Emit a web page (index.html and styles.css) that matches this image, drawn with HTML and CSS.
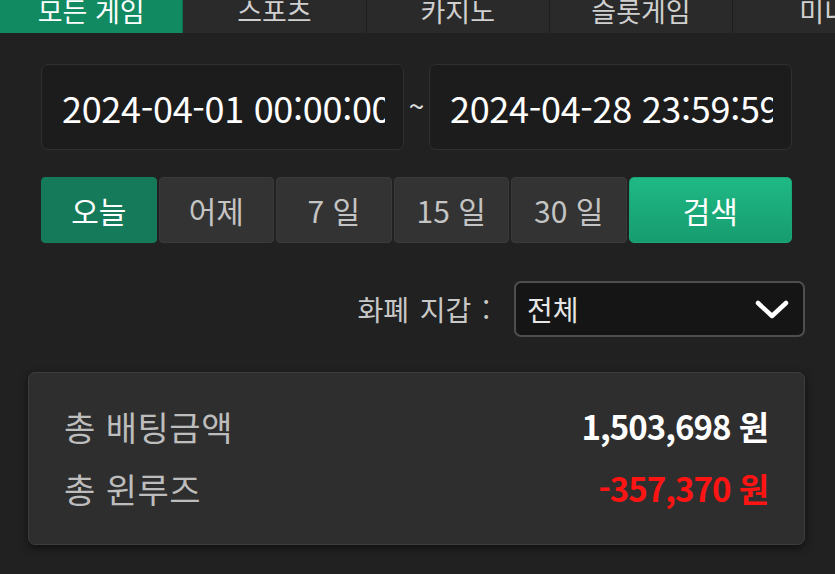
FILE: index.html
```html
<!DOCTYPE html>
<html lang="ko">
<head>
<meta charset="utf-8">
<link rel="stylesheet" href="styles.css">
</head>
<body>
<div class="page">
  <nav class="tabs">
    <div class="tab active"><span>모든 게임</span></div>
    <div class="tab"><span>스포츠</span></div>
    <div class="tab"><span>카지노</span></div>
    <div class="tab"><span>슬롯게임</span></div>
    <div class="tab last"><span>미니게임</span></div>
  </nav>

  <div class="dates">
    <div class="date-box"><span>2024-04-01 00:00:00</span></div>
    <div class="tilde">~</div>
    <div class="date-box"><span>2024-04-28 23:59:59</span></div>
  </div>

  <div class="periods">
    <button class="period active">오늘</button>
    <button class="period">어제</button>
    <button class="period">7 일</button>
    <button class="period">15 일</button>
    <button class="period">30 일</button>
    <button class="search">검색</button>
  </div>

  <div class="wallet">
    <span class="wallet-label">화폐 지갑 :</span>
    <div class="select">
      <span>전체</span>
      <svg class="chev" width="34" height="20" viewBox="0 0 34 20"><path d="M3 3 L17 16 L31 3" fill="none" stroke="#fff" stroke-width="4.5" stroke-linecap="round" stroke-linejoin="round"/></svg>
    </div>
  </div>

  <div class="summary">
    <div class="row">
      <span class="label">총 배팅금액</span>
      <span class="value">1,503,698 원</span>
    </div>
    <div class="row">
      <span class="label">총 윈루즈</span>
      <span class="value neg">-357,370 원</span>
    </div>
  </div>
</div>
</body>
</html>
```

FILE: styles.css
```css
* { box-sizing: border-box; }
html, body {
  margin: 0;
  padding: 0;
  background: #212121;
  overflow: hidden;
}
body {
  font-family: "Noto Sans CJK KR", "Noto Sans", sans-serif;
  color: #fff;
  width: 835px;
  height: 574px;
}
.page {
  width: 835px;
  height: 574px;
  overflow: hidden;
}
.tabs {
  display: flex;
  height: 33px;
  background: #2a2a2a;
  overflow: hidden;
}
.tab {
  flex: 0 0 183.3px;
  display: flex;
  align-items: flex-end;
  justify-content: center;
  border-right: 1px solid #1e1e1e;
  font-size: 27px;
  color: #d0d0d0;
  line-height: 1;
  padding-bottom: 9px;
}
.tab span { white-space: nowrap; }
.tab.last {
  justify-content: flex-start;
  padding-left: 66px;
}
.tab.active {
  background: #118a62;
  color: #fff;
  border-right-color: #0e7050;
}

.dates {
  display: flex;
  align-items: center;
  margin: 31px 0 0 41px;
}
.date-box {
  width: 363px;
  height: 86px;
  background: #1c1c1c;
  border: 1.5px solid #303030;
  border-radius: 7px;
  padding: 0 18px 0 20px;
  display: flex;
  align-items: center;
  overflow: hidden;
  font-size: 36px;
  color: #fff;
  white-space: nowrap;
  letter-spacing: -0.3px;
}
.date-box span { overflow: hidden; display: block; width: 100%; }
.tilde {
  width: 25px;
  text-align: center;
  font-size: 28px;
  color: #ddd;
  padding-bottom: 4px;
}

.periods {
  display: flex;
  gap: 2px;
  margin: 27px 0 0 41px;
  height: 66px;
  width: 751px;
}
.period, .search {
  font-family: "Noto Sans CJK KR", "Noto Sans", sans-serif;
  font-size: 30px;
  border: 1px solid #3a3a3a;
  border-radius: 4px;
  background: #333333;
  color: #c4c4c4;
  width: 115.5px;
  padding: 0;
  line-height: 1;
}
.period.active {
  background: #157a59;
  border-color: #157a59;
  color: #fff;
}
.search {
  flex: 1;
  background: linear-gradient(#1fb985, #179c6f);
  border-color: #1aa777;
  color: #fff;
  border-radius: 5px;
}

.wallet {
  display: flex;
  align-items: center;
  justify-content: flex-end;
  margin: 38px 30px 0 0;
  gap: 24px;
}
.wallet-label {
  font-size: 28px;
  color: #c8c8c8;
  word-spacing: 3px;
}
.select {
  width: 291px;
  height: 56px;
  background: #151515;
  border: 2px solid #4e4e4e;
  border-radius: 7px;
  display: flex;
  align-items: center;
  justify-content: space-between;
  padding: 0 14px 0 11px;
  font-size: 28px;
  color: #e6e6e6;
}
.chev { display: block; margin-top: 2px; }

.summary {
  margin: 35px 30px 0 28px;
  height: 173px;
  background: #2e2e2e;
  border: 1.5px solid #3d3d3d;
  border-radius: 7px;
  box-shadow: 0 3px 8px rgba(0,0,0,0.55);
  padding: 32px 36px 0 35px;
  display: flex;
  flex-direction: column;
  gap: 20px;
}
.row {
  display: flex;
  justify-content: space-between;
  align-items: center;
  height: 42px;
}
.label {
  font-size: 34px;
  color: #bdbdbd;
  letter-spacing: 0.5px;
}
.value {
  font-size: 33px;
  font-weight: 700;
  color: #fff;
  letter-spacing: -1px;
}
.value.neg { color: #ff1414; }
```
